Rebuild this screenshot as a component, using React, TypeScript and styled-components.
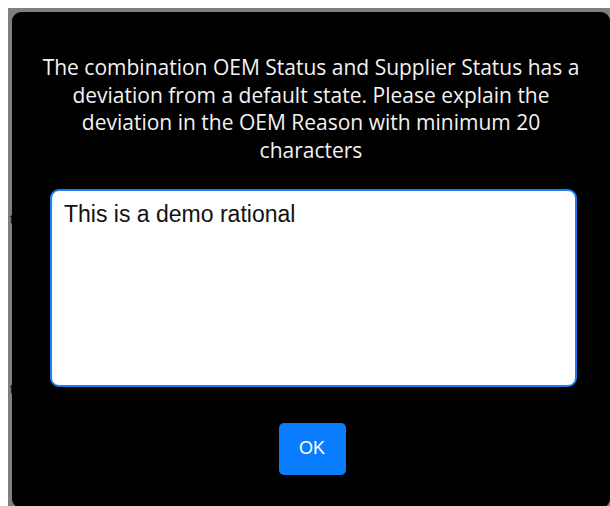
import React, { useState } from "react";
import styled, { createGlobalStyle } from "styled-components";

const GlobalStyle = createGlobalStyle`
  html, body {
    margin: 0;
    padding: 0;
    background: #ffffff;
    overflow: hidden;
  }
  body {
    width: 610px;
    height: 506px;
  }
`;

const Page = styled.div`
  position: relative;
  width: 610px;
  height: 506px;
  padding: 8px 0 0 8px;
  box-sizing: border-box;
  font-family: "Liberation Sans", Arial, sans-serif;
`;

const Table = styled.div`
  display: flex;
  flex-direction: column;
`;

const Row = styled.div<{ $h: number }>`
  height: ${(p) => p.$h}px;
  display: flex;
  align-items: center;
  padding-left: 2px;
  font-size: 14px;
  color: #222;
`;

const Backdrop = styled.div`
  position: absolute;
  top: 8px;
  left: 8px;
  right: 0;
  bottom: 0;
  background: rgba(0, 0, 0, 0.5);
  padding: 4px 0 0 4px;
  box-sizing: border-box;
`;

const Dialog = styled.div`
  width: 598px;
  height: 496px;
  background: #000000;
  border-radius: 9px;
  box-sizing: border-box;
  padding-top: 42px;
  display: flex;
  flex-direction: column;
  align-items: center;
`;

const Message = styled.p`
  margin: 0;
  width: 542px;
  text-align: center;
  color: #f2f2f2;
  font-family: "Open Sans", "Noto Sans", sans-serif;
  font-size: 21px;
  line-height: 27.7px;
`;

const Reason = styled.textarea`
  margin: 24px 0 0 5px;
  width: 527px;
  height: 198px;
  box-sizing: border-box;
  border: 2px solid #1a7ff5;
  border-radius: 9px;
  background: #ffffff;
  padding: 9px 12px;
  resize: none;
  outline: none;
  font-family: "Liberation Sans", Arial, sans-serif;
  font-size: 23px;
  line-height: 28px;
  color: #111111;
`;

const OkButton = styled.button`
  margin: 36px 0 0 2px;
  width: 67px;
  height: 52px;
  border: none;
  border-radius: 5px;
  background: #0a7dff;
  color: #ffffff;
  font-family: "Liberation Sans", Arial, sans-serif;
  font-size: 18px;
  cursor: pointer;
`;

export default function App() {
  const [reason, setReason] = useState("This is a demo rational");
  return (
    <>
      <GlobalStyle />
      <Page>
        <Table>
          <Row $h={196} />
          <Row $h={30}>t</Row>
          <Row $h={140} />
          <Row $h={30}>t</Row>
        </Table>
        <Backdrop>
          <Dialog role="dialog">
            <Message>
              The combination OEM Status and Supplier Status has a deviation from a default
              state. Please explain the deviation in the OEM Reason with minimum 20 characters
            </Message>
            <Reason value={reason} onChange={(e) => setReason(e.target.value)} />
            <OkButton>OK</OkButton>
          </Dialog>
        </Backdrop>
      </Page>
    </>
  );
}
